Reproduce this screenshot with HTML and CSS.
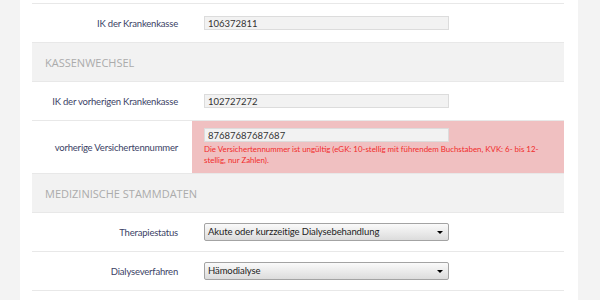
FILE: index.html
```html
<!DOCTYPE html>
<html lang="de">
<head>
    <meta charset="UTF-8">
    <title>Patientendaten</title>
    <link rel="stylesheet" href="styles.css">
</head>
<body>
    <div class="page">
        <div class="form">
            <div class="spacer"></div>

            <div class="row">
                <div class="label">IK der Krankenkasse</div>
                <div class="field"><input type="text" class="text" value="106372811"></div>
            </div>

            <div class="section">Kassenwechsel</div>

            <div class="row">
                <div class="label">IK der vorherigen Krankenkasse</div>
                <div class="field"><input type="text" class="text" value="102727272"></div>
            </div>

            <div class="row row-error">
                <div class="label">vorherige Versichertennummer</div>
                <div class="field">
                    <input type="text" class="text" value="87687687687687">
                    <p class="error-msg">Die Versichertennummer ist ungültig (eGK: 10-stellig mit führendem Buchstaben, KVK: 6- bis 12-stellig, nur Zahlen).</p>
                </div>
            </div>

            <div class="section">Medizinische Stammdaten</div>

            <div class="row">
                <div class="label">Therapiestatus</div>
                <div class="field">
                    <div class="select">Akute oder kurzzeitige Dialysebehandlung</div>
                </div>
            </div>

            <div class="row">
                <div class="label">Dialyseverfahren</div>
                <div class="field">
                    <div class="select">Hämodialyse</div>
                </div>
            </div>

            <div class="row">
                <div class="label">&nbsp;</div>
                <div class="field">
                    <div class="select"></div>
                </div>
            </div>
        </div>
    </div>
</body>
</html>
```

FILE: styles.css
```css
/* Base */
* {
    box-sizing: border-box;
    margin: 0;
    padding: 0;
}

body {
    background: #f3f3f3;
    font-family: Lato, "Open Sans", sans-serif;
    font-size: 9.5px;
    color: #333;
}

.page {
    width: 558px;
    margin-left: 20px;
    background: #fff;
    padding: 0 14px 0 12px;
    min-height: 300px;
}

.spacer {
    height: 3px;
}

/* Form rows */
.row {
    display: grid;
    grid-template-columns: 160px 1fr;
    border-top: 1px solid #e8e8e8;
    min-height: 39px;
}

.label {
    align-self: center;
    text-align: right;
    white-space: nowrap;
    letter-spacing: -0.2px;
    padding-right: 14px;
    color: #3b3f66;
}

.field {
    align-self: center;
    padding: 0 12px;
}

.text {
    display: block;
    width: 245px;
    height: 14px;
    background: #f2f2f2;
    border: 1px solid #dcdcdc;
    font: inherit;
    font-size: 9.5px;
    color: #333;
    padding: 0 3px;
}

/* Error state */
.row-error {
    min-height: 53px;
}

.row-error .field {
    align-self: stretch;
    background: #f0c0c1;
    padding-top: 7px;
    padding-bottom: 6px;
}

.error-msg {
    margin-top: 2px;
    font-size: 7.9px;
    line-height: 11px;
    color: #f02b2b;
}

/* Section headers */
.section {
    background: #f2f2f2;
    border-top: 1px solid #e8e8e8;
    height: 39px;
    line-height: 39px;
    padding-left: 13px;
    color: #ababab;
    font-family: "Open Sans", sans-serif;
    font-size: 11px;
    text-transform: uppercase;
}

/* Selects */
.select {
    position: relative;
    width: 245px;
    height: 18px;
    line-height: 16px;
    border: 1px solid #a3a3a3;
    border-radius: 2px;
    background: linear-gradient(#fafafa, #dcdcdc);
    padding-left: 3px;
    color: #222;
    letter-spacing: -0.1px;
}

.select::after {
    content: "";
    position: absolute;
    right: 5px;
    top: 7px;
    border-left: 3px solid transparent;
    border-right: 3px solid transparent;
    border-top: 3px solid #000;
}
```
